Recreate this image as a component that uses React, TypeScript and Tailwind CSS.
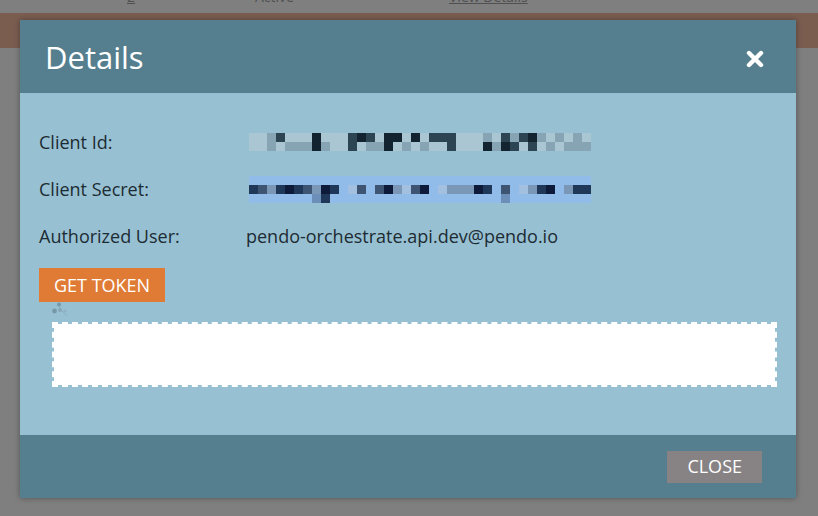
import React from "react";

const idRow1 = "LLMDLLLKLLLDKDLKKLKLDDDLLLMLDMDKMLMLML";
const idRow2 = "LLMLMMMKMLLDLMMKLMLMLLDLLLKMKDLDLMLMMM";
const secTop = "BBBBBBBBBBBBBBBBBBBBBBBBBBBBBBBBBBBBBB";
const secMid = "DGMDKDGMKDBLGBGKMLGKBLMMMKDBGBLMDKBMDD";
const secBot = "BBBBBBBNDBBBBBBBBBBBBBBBBBBBNBBBBBBBBB";

const idColors: Record<string, string> = {
  L: "#a9c6d2",
  M: "#86a4b3",
  D: "#2d4452",
  K: "#142330",
};
const secColors: Record<string, string> = {
  B: "#91bbe8",
  N: "#6b8fb8",
  D: "#1f3758",
  K: "#0d1a3a",
  G: "#3d5472",
  M: "#7a97b8",
  L: "#a3c0e0",
};

function Mosaic({ rows, colors }: { rows: string[]; colors: Record<string, string> }) {
  return (
    <div className="flex flex-col">
      {rows.map((r, i) => (
        <div key={i} className="flex">
          {r.split("").map((c, j) => (
            <div key={j} className="w-[9px] h-[9px]" style={{ background: colors[c] }} />
          ))}
        </div>
      ))}
    </div>
  );
}

export default function App() {
  return (
    <div
      className="relative w-[818px] h-[516px] overflow-hidden bg-[#7f7f7f]"
      style={{ fontFamily: '"Open Sans", "Noto Sans", sans-serif' }}
    >
      {/* background page (under overlay) */}
      <div className="h-[13px] overflow-hidden">
        <div className="flex mt-[-11px] text-[14px] leading-[16px] text-[#505050]">
          <span className="ml-[127px] w-[128px] underline">2</span>
          <span className="w-[194px]">Active</span>
          <span className="underline">View Details</span>
        </div>
      </div>
      <div className="h-[35px] bg-[#7b5d50]" />

      {/* modal */}
      <div className="absolute left-[20px] top-[20px] w-[776px] h-[478px] flex flex-col shadow-[0_0_6px_rgba(0,0,0,0.35)]">
        <div className="h-[73px] bg-[#557f8f] flex items-center justify-between pl-[25px] pr-[32px]">
          <span className="text-[31px] text-white leading-none mt-[2px]">Details</span>
          <svg width="18" height="18" viewBox="0 0 18 18" className="mt-[4px]">
            <path d="M3 3 L15 15 M15 3 L3 15" stroke="white" strokeWidth="4.4" strokeLinecap="round" />
          </svg>
        </div>

        <div className="flex-1 bg-[#97c1d2] pl-[19px] pr-[19px] pt-[37px] text-[#1d2b33]">
          <div className="flex flex-col gap-[23px] text-[18px] leading-[24px]">
            <div className="flex items-center h-[24px]">
              <span className="w-[210px]">Client Id:</span>
              <Mosaic rows={[idRow1, idRow2]} colors={idColors} />
            </div>
            <div className="flex items-center h-[24px]">
              <span className="w-[210px]">Client Secret:</span>
              <Mosaic rows={[secTop, secMid, secBot]} colors={secColors} />
            </div>
            <div className="flex items-center h-[24px]">
              <span className="w-[207px]">Authorized User:</span>
              <span>pendo-orchestrate.api.dev@pendo.io</span>
            </div>
          </div>

          <div className="mt-[20px] flex">
            <div className="h-[34px] px-[15px] bg-[#df7b35] text-white text-[18px] flex items-center">
              GET TOKEN
            </div>
          </div>

          <div className="h-[20px] pl-[12px] flex items-start">
            <svg width="24" height="20" viewBox="0 0 24 20">
              <circle cx="8" cy="2.5" r="2" fill="#6f8d9e" opacity="0.8" />
              <circle cx="3.5" cy="9" r="2.4" fill="#6f8d9e" opacity="0.8" />
              <circle cx="9" cy="8" r="2" fill="#7c98a8" opacity="0.6" />
              <circle cx="14" cy="9" r="1.6" fill="#88a4b3" opacity="0.5" />
              <path d="M8 4 L10 8 L16 14" stroke="#86a2b2" strokeWidth="1" fill="none" opacity="0.6" />
            </svg>
          </div>

          <div className="ml-[13px] h-[65px] border-2 border-dashed border-white bg-white bg-clip-padding" />
        </div>

        <div className="h-[63px] bg-[#557f8f] flex items-center justify-end pr-[34px]">
          <div className="h-[32px] px-[20px] bg-[#878385] text-white text-[18px] flex items-center">
            CLOSE
          </div>
        </div>
      </div>
    </div>
  );
}
